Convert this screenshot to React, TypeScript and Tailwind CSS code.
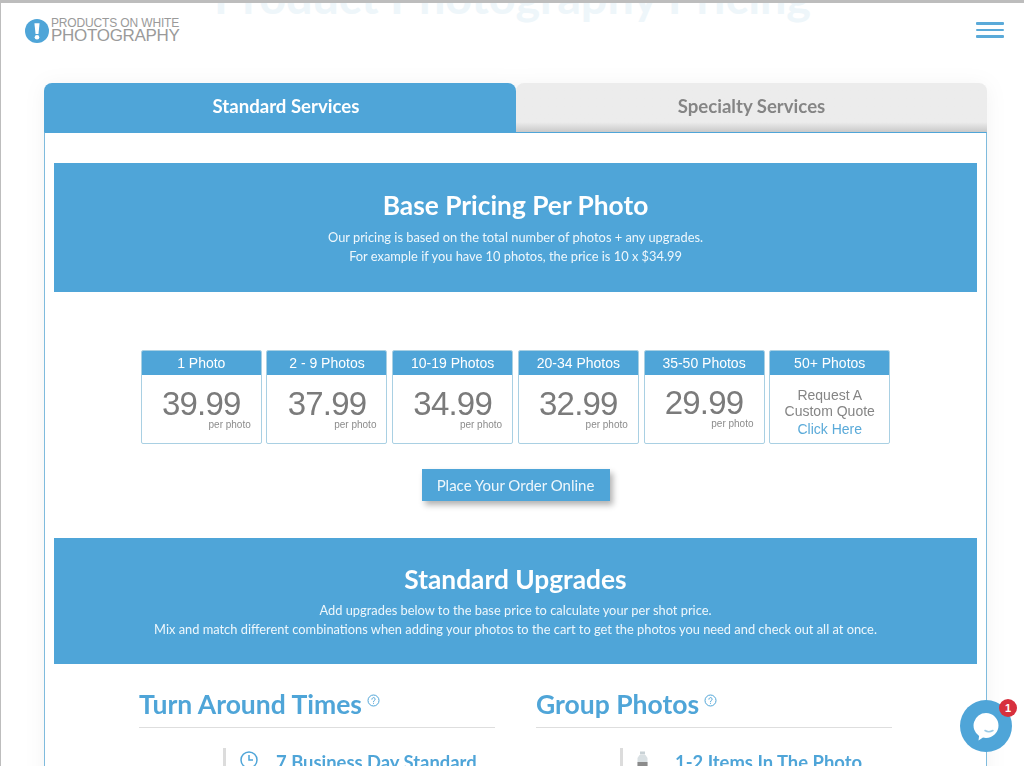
const tiers = [
  { label: "1 Photo", price: "39.99" },
  { label: "2 - 9 Photos", price: "37.99" },
  { label: "10-19 Photos", price: "34.99" },
  { label: "20-34 Photos", price: "32.99" },
  { label: "35-50 Photos", price: "29.99" },
]

const arial = "font-['Liberation_Sans',Arial,sans-serif]"

function HelpIcon() {
  return (
    <svg width="13" height="13" viewBox="0 0 13 13" fill="none" stroke="#4fa5d8" strokeWidth="1" className="mb-[7px] ml-[5px] shrink-0">
      <circle cx="6.5" cy="6.5" r="5.5" />
      <path d="M4.9 5.2a1.6 1.6 0 1 1 2.5 1.3c-.6.4-.9.7-.9 1.3" strokeLinecap="round" />
      <circle cx="6.5" cy="9.6" r=".5" fill="#4fa5d8" stroke="none" />
    </svg>
  )
}

function ClockIcon() {
  return (
    <svg width="18" height="18" viewBox="0 0 18 18" fill="none" stroke="#4fa5d8" strokeWidth="1.5" className="shrink-0 ml-px">
      <circle cx="9" cy="9" r="8" />
      <path d="M9 4v5h4" />
    </svg>
  )
}

function BottleIcon() {
  return (
    <svg width="11" height="22" viewBox="0 0 11 22" className="shrink-0 ml-px">
      <rect x="3" y="0.5" width="5" height="3" fill="#c9d2d6" />
      <path d="M0.5 7l2-3h6l2 3v15H0.5z" fill="#d9e0e3" />
      <rect x="0.5" y="11" width="10" height="11" fill="#8b8b8b" />
    </svg>
  )
}

function PriceCard({ label, price, raised }: { label: string; price: string; raised?: boolean }) {
  return (
    <div className={`w-[121px] h-[94px] border border-[#a9d0e3] rounded-[2px] bg-white overflow-hidden ${arial}`}>
      <div className="h-[24px] bg-[#4fa5d8] text-white text-[14px] leading-[24px] text-center">{label}</div>
      <div className={`flex flex-col items-center ${raised ? "pt-[11.5px]" : "pt-[12.5px]"}`}>
        <div className="text-[33px] leading-[31px] tracking-[-0.8px] text-[#7b7b7b]">{price}</div>
        <div className="self-end pr-[10px] text-[10px] leading-[12px] text-[#8c8c8c]">per photo</div>
      </div>
    </div>
  )
}

function Banner({ title, lines, className, linesGap }: { title: string; lines: string[]; className: string; linesGap: string }) {
  return (
    <div className={`bg-[#4fa5d8] text-white text-center ${className}`}>
      <h2 className="text-[26.3px] leading-[34px] font-bold">{title}</h2>
      <div className={linesGap}>
        {lines.map((line) => (
          <p key={line} className="text-[12.85px] leading-[18.5px] text-[#eef7fc]">{line}</p>
        ))}
      </div>
    </div>
  )
}

function UpgradeColumn({ title, item, icon, itemGap }: { title: string; item: string; icon: React.ReactNode; itemGap: string }) {
  return (
    <div className="w-[356px]">
      <div className="flex items-center h-[44px] border-b border-[#dedede] pb-[4px] text-[#4fa5d8]">
        <h3 className="text-[26.5px] leading-[34px] font-bold">{title}</h3>
        <HelpIcon />
      </div>
      <div className="ml-[84px] mt-[20px] border-l-[3px] border-[#dcdcdc] pl-[13px] pt-[3px] h-[60px] flex items-start">
        <div className="w-[18px] flex">{icon}</div>
        <div className={`text-[#4fa5d8] text-[18.4px] leading-[22px] font-bold ${itemGap}`}>{item}</div>
      </div>
    </div>
  )
}

export default function App() {
  return (
    <div className="relative w-[1024px] h-[766px] overflow-hidden bg-white border-t-[3px] border-l border-[#bdbdbd] font-['Lato',sans-serif]">
      {/* page title scrolled under the sticky header */}
      <div className="absolute left-0 right-0 -top-[34px] text-center text-[46.7px] leading-[54px] font-bold text-[#eef6fa]">
        Product Photography Pricing
      </div>

      <header className="relative flex items-center justify-between h-[80px] pl-[24px] pr-[20px] pb-[25px]">
        <div className={`flex items-center ${arial}`}>
          <svg width="24" height="24" viewBox="0 0 25 25">
            <circle cx="12.5" cy="12.5" r="12.5" fill="#4fa5d8" />
            <path d="M9.8 4.5h5.4l-1.2 11h-3z" fill="white" />
            <circle cx="12.5" cy="19" r="2.4" fill="white" />
          </svg>
          <div className="ml-[2px] text-[#9a9a9a]">
            <div className="text-[12px] leading-[11px] tracking-[-0.15px]">PRODUCTS ON WHITE</div>
            <div className="text-[17px] leading-[14px] tracking-[-0.3px]">PHOTOGRAPHY</div>
          </div>
        </div>
        <div className="flex flex-col gap-[4px] w-[28px] -mt-px">
          <div className="h-[2.5px] bg-[#5aaad9] rounded-[1px]" />
          <div className="h-[2.5px] bg-[#5aaad9] rounded-[1px]" />
          <div className="h-[2.5px] bg-[#5aaad9] rounded-[1px]" />
        </div>
      </header>

      <main className="ml-[43px] w-[943px] drop-shadow-[0_2px_10px_rgba(0,0,0,0.05)]">
        <div className="flex h-[49px]">
          <div className="w-[472px] pl-[12px] bg-[#4fa5d8] rounded-t-[8px] text-white text-[18.6px] font-bold leading-[47px] text-center">
            Standard Services
          </div>
          <div className="flex-1 bg-gradient-to-b from-[#ececec] from-80% to-[#c9c9c9] rounded-t-[8px] text-[#858585] text-[18.6px] font-bold leading-[47px] text-center">
            Specialty Services
          </div>
        </div>

        <div className="border border-[#7fbbdd] border-t-[#4fa5d8] bg-white px-[9px] pt-[30px] h-[700px]">
          <Banner
            title="Base Pricing Per Photo"
            className="h-[129px] pt-[25px]"
            linesGap="mt-[6px]"
            lines={[
              "Our pricing is based on the total number of photos + any upgrades.",
              "For example if you have 10 photos, the price is 10 x $34.99",
            ]}
          />

          <div className="flex justify-center gap-[4.7px] mt-[58px]">
            {tiers.map((tier) => (
              <PriceCard key={tier.label} label={tier.label} price={tier.price} raised={tier.price === "29.99"} />
            ))}
            <div className={`w-[121px] h-[94px] border border-[#a9d0e3] rounded-[2px] bg-white overflow-hidden text-center ${arial}`}>
              <div className="h-[24px] bg-[#4fa5d8] text-white text-[14px] leading-[24px]">50+ Photos</div>
              <div className="pt-[12px] text-[14px] leading-[16px] text-[#858585]">
                <div>Request A</div>
                <div>Custom Quote</div>
                <div className="mt-[2px] text-[#5aaad9]">Click Here</div>
              </div>
            </div>
          </div>

          <div className="flex justify-center mt-[25px]">
            <button className="w-[188px] h-[32px] bg-[#4fa5d8] text-[#eef7fc] text-[15px] shadow-[3px_4px_6px_rgba(0,0,0,0.3)]">
              Place Your Order Online
            </button>
          </div>

          <Banner
            title="Standard Upgrades"
            className="h-[126px] mt-[37px] pt-[24px]"
            linesGap="mt-[5px]"
            lines={[
              "Add upgrades below to the base price to calculate your per shot price.",
              "Mix and match different combinations when adding your photos to the cart to get the photos you need and check out all at once.",
            ]}
          />

          <div className="flex mt-[20px] pl-[85px] gap-[41px]">
            <UpgradeColumn title="Turn Around Times" item="7 Business Day Standard" icon={<ClockIcon />} itemGap="ml-[19px]" />
            <UpgradeColumn title="Group Photos" item="1-2 Items In The Photo" icon={<BottleIcon />} itemGap="ml-[21px]" />
          </div>
        </div>
      </main>

      {/* chat widget */}
      <div className="absolute left-[959px] top-[697px] w-[52px] h-[52px] rounded-full bg-[#4fa5d8]">
        <svg width="26" height="28" viewBox="0 0 26 28" className="absolute left-[13px] top-[13px]">
          <path d="M13 0a12.5 12.5 0 0 1 0 25c-1 0-2-.1-3-.4L5.5 27.5l.6-4.6A12.5 12.5 0 0 1 13 0z" fill="white" />
          <path d="M12 17.5c2.5 1.6 5 1.6 8 0" stroke="#9ccbe6" strokeWidth="1.5" fill="none" strokeLinecap="round" />
        </svg>
        <div className={`absolute -top-[1px] -right-[5px] w-[18px] h-[18px] rounded-full bg-[#d7303e] text-white text-[11px] font-bold leading-[18px] text-center ${arial}`}>
          1
        </div>
      </div>
    </div>
  )
}
